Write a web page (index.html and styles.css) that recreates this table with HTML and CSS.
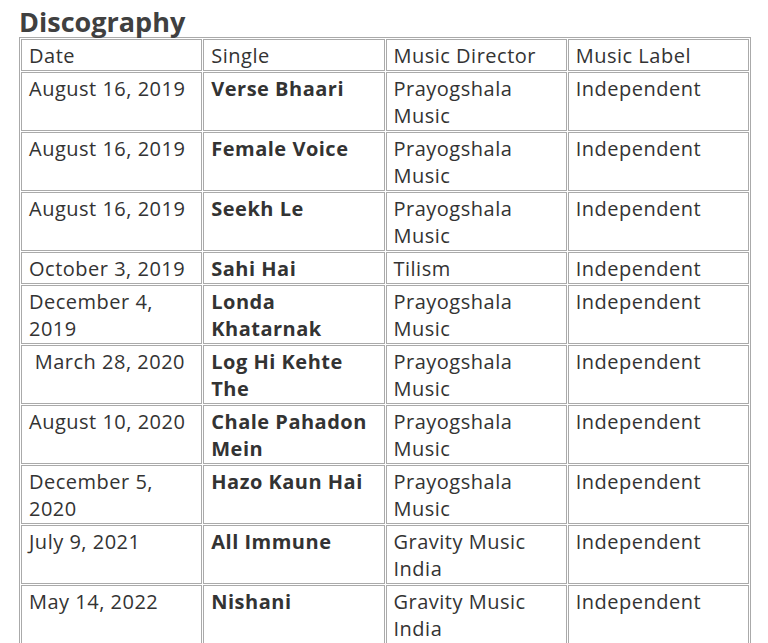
FILE: index.html
```html
<!DOCTYPE html>
<html>
<head>
<meta charset="utf-8">
<link rel="stylesheet" href="styles.css">
</head>
<body>
<h2 class="title">Discography</h2>
<table class="disco">
  <tr><td>Date</td><td>Single</td><td>Music Director</td><td>Music Label</td></tr>
  <tr><td>August 16, 2019</td><td class="b">Verse Bhaari</td><td>Prayogshala Music</td><td>Independent</td></tr>
  <tr><td>August 16, 2019</td><td class="b">Female Voice</td><td>Prayogshala Music</td><td>Independent</td></tr>
  <tr><td>August 16, 2019</td><td class="b">Seekh Le</td><td>Prayogshala Music</td><td>Independent</td></tr>
  <tr><td>October 3, 2019</td><td class="b">Sahi Hai</td><td>Tilism</td><td>Independent</td></tr>
  <tr><td>December 4, 2019</td><td class="b">Londa Khatarnak</td><td>Prayogshala Music</td><td>Independent</td></tr>
  <tr><td>&nbsp;March 28, 2020</td><td class="b">Log Hi Kehte The</td><td>Prayogshala Music</td><td>Independent</td></tr>
  <tr><td>August 10, 2020</td><td class="b">Chale Pahadon Mein</td><td>Prayogshala Music</td><td>Independent</td></tr>
  <tr><td>December 5, 2020</td><td class="b">Hazo Kaun Hai</td><td>Prayogshala Music</td><td>Independent</td></tr>
  <tr><td>July 9, 2021</td><td class="b">All Immune</td><td>Gravity Music India</td><td>Independent</td></tr>
  <tr><td>May 14, 2022</td><td class="b">Nishani</td><td>Gravity Music India</td><td>Independent</td></tr>
</table>
</body>
</html>
```
FILE: styles.css
```css
html, body {
  margin: 0;
  padding: 0;
  background: #fff;
}
body {
  padding: 6px 0 0 19px;
  font-family: "Open Sans", "Noto Sans", sans-serif;
  color: #333;
}
.title {
  margin: 0;
  font-size: 27px;
  line-height: 31px;
  font-weight: 700;
  color: #404040;
}
.disco {
  border: 1px solid #aaa;
  border-spacing: 1px;
  width: 732px;
  table-layout: fixed;
  font-size: 20px;
  letter-spacing: 0.5px;
  line-height: 27px;
}
.disco td {
  border: 1px solid #aaa;
  padding: 2px 7px 1px 7px;
  vertical-align: top;
  text-align: left;
}
.disco td.b {
  font-weight: 700;
}
```
